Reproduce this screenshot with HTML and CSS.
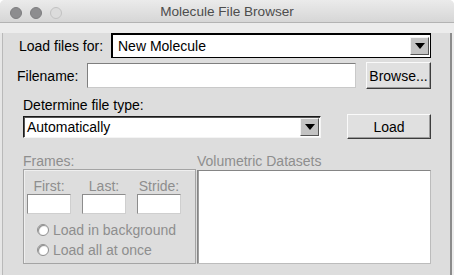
FILE: index.html
```html
<!DOCTYPE html>
<html lang="en">
<head>
    <meta charset="UTF-8">
    <title>Molecule File Browser</title>
    <link rel="stylesheet" href="styles.css">
</head>
<body>
    <div class="window">
        <div class="titlebar">
            <div class="lights">
                <span class="light"></span>
                <span class="light"></span>
                <span class="light off"></span>
            </div>
            <div class="title">Molecule File Browser</div>
        </div>

        <div class="content">
            <!-- Target molecule -->
            <div class="row row-load">
                <span class="label">Load files for:</span>
                <div class="menu menu-focus">
                    <span class="menu-text">New Molecule</span>
                    <span class="menu-arrow"></span>
                </div>
            </div>

            <!-- File name -->
            <div class="row row-file">
                <span class="label">Filename:</span>
                <div class="entry entry-file"></div>
                <div class="button button-browse">Browse...</div>
            </div>

            <!-- File type -->
            <div class="type-label">Determine file type:</div>
            <div class="row row-type">
                <div class="menu menu-type">
                    <span class="menu-text">Automatically</span>
                    <span class="menu-arrow"></span>
                </div>
                <div class="button button-load">Load</div>
            </div>

            <!-- Frames and volumetric data -->
            <div class="lower">
                <div class="frames">
                    <div class="group-label">Frames:</div>
                    <div class="frames-box">
                        <div class="fields">
                            <div class="field">
                                <span>First:</span>
                                <div class="entry entry-small"></div>
                            </div>
                            <div class="field">
                                <span>Last:</span>
                                <div class="entry entry-small"></div>
                            </div>
                            <div class="field">
                                <span>Stride:</span>
                                <div class="entry entry-small"></div>
                            </div>
                        </div>
                        <div class="radio-row first-radio"><span class="radio"></span>Load in background</div>
                        <div class="radio-row"><span class="radio"></span>Load all at once</div>
                    </div>
                </div>
                <div class="volumes">
                    <div class="group-label">Volumetric Datasets</div>
                    <div class="listbox"></div>
                </div>
            </div>
        </div>
    </div>
</body>
</html>
```

FILE: styles.css
```css
body {
    margin: 0;
    background: #fff;
    font-family: "Liberation Sans", Arial, sans-serif;
    font-size: 14px;
    color: #000;
}
.window {
    width: 454px;
    height: 275px;
    background: #ececec;
    border-radius: 5px 5px 0 0;
    overflow: hidden;
}
.titlebar {
    height: 22px;
    display: grid;
    grid-template-columns: 1fr auto 1fr;
    background: linear-gradient(#ebebeb, #d6d6d6);
    border-bottom: 1px solid #b3b3b3;
}
.lights {
    display: flex;
    gap: 8px;
    padding: 7px 0 0 10px;
}
.light {
    width: 10px;
    height: 10px;
    border-radius: 50%;
    background: #8d8d8f;
    border: 1px solid #7e7e80;
}
.light.off {
    background: #dcdcdc;
    border-color: #c2c2c2;
}
.title {
    font-size: 13.6px;
    color: #4d4d4d;
    line-height: 18px;
    padding-top: 3px;
}
.content {
    box-sizing: border-box;
    width: 452px;
    height: 251px;
    background: #dddddd;
    border-left: 2px solid #e6e6e6;
    border-right: 2px solid #8c8c8c;
    border-bottom: 2px solid #8c8c8c;
    box-shadow: inset 1px 0 0 #b9b9b9;
    padding-right: 19px;
}
.row {
    display: flex;
    align-items: center;
}
.row-load {
    margin-top: 10px;
    height: 25px;
    padding-left: 17px;
}
.row-file {
    margin-top: 4px;
    height: 27px;
    padding-left: 15px;
}
.type-label {
    margin-top: 8px;
    padding-left: 21px;
    line-height: 16px;
}
.row-type {
    margin-top: 1px;
    height: 25px;
    padding-left: 21px;
}
.menu {
    box-sizing: border-box;
    display: flex;
    align-items: center;
    background: #fff;
}
.menu-focus {
    margin-left: auto;
    width: 320px;
    height: 25px;
    border: 1px solid #000;
    box-shadow: inset 1px 1px 0 #000;
    padding-left: 6px;
}
.menu-type {
    width: 298px;
    height: 22px;
    border: 1px solid;
    border-color: #1a1a1a #f4f4f4 #f4f4f4 #1a1a1a;
    box-shadow: inset 1px 1px 0 #555;
    padding-left: 3px;
}
.menu-arrow {
    box-sizing: border-box;
    margin-left: auto;
    margin-right: 1px;
    width: 19px;
    height: 18px;
    background: #c3c3c3;
    border: 1px solid;
    border-color: #f2f2f2 #555 #555 #f2f2f2;
    display: flex;
    align-items: center;
    justify-content: center;
}
.menu-arrow::after {
    content: "";
    border-left: 5px solid transparent;
    border-right: 5px solid transparent;
    border-top: 6px solid #000;
}
.entry {
    box-sizing: border-box;
    background: #fff;
    border: 1px solid;
    border-color: #7f7f7f #c9c9c9 #c9c9c9 #7f7f7f;
}
.entry-file {
    margin-left: auto;
    width: 269px;
    height: 25px;
}
.button {
    box-sizing: border-box;
    background: #e0e0e0;
    border: 1px solid;
    border-color: #fafafa #3c3c3c #3c3c3c #fafafa;
    box-shadow: inset -1px -1px 0 #9c9c9c;
    display: flex;
    align-items: center;
    justify-content: center;
}
.button-browse {
    margin-left: 10px;
    width: 65px;
    height: 27px;
}
.button-load {
    margin-left: auto;
    width: 84px;
    height: 25px;
}
.lower {
    display: flex;
    gap: 1px;
    margin-top: 15px;
    padding-left: 21px;
}
.group-label {
    color: #8e8e8e;
    line-height: 15px;
}
.frames {
    width: 173px;
}
.frames-box {
    box-sizing: border-box;
    height: 95px;
    border: 1px solid #a4a4a4;
    box-shadow: inset 1px 1px 0 #efefef;
    padding: 9px 0 0 3px;
    color: #8e8e8e;
}
.fields {
    display: flex;
    gap: 11px;
}
.field {
    width: 44px;
    display: flex;
    flex-direction: column;
    align-items: center;
    line-height: 15px;
}
.entry-small {
    width: 44px;
    height: 20px;
    border-color: #8c8c8c #cfcfcf #cfcfcf #8c8c8c;
}
.radio-row {
    display: flex;
    align-items: center;
    gap: 4px;
    height: 20px;
    padding-left: 10px;
}
.first-radio {
    margin-top: 6px;
}
.radio {
    box-sizing: border-box;
    width: 12px;
    height: 12px;
    border-radius: 50%;
    background: #fff;
    border: 1px solid #8f8f8f;
    box-shadow: inset 1px 1px 1px #8a8a8a;
}
.volumes {
    width: 234px;
}
.listbox {
    box-sizing: border-box;
    margin-top: 1px;
    height: 94px;
    background: #fff;
    border: 1px solid;
    border-color: #858585 #bcbcbc #bcbcbc #858585;
    box-shadow: inset 1px 0 0 #a0a0a0;
}
```
